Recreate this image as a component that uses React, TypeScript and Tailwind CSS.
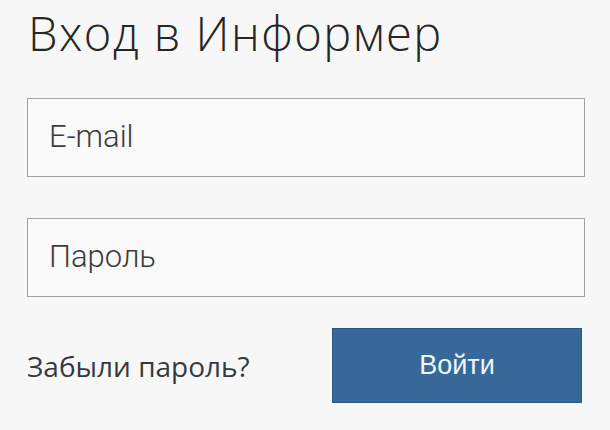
export default function App() {
  return (
    <div className="h-[430px] w-[610px] bg-[#f7f7f7] overflow-hidden">
      <form className="flex flex-col pl-[27px] pt-[10px] w-[585px]">
        {/* Title */}
        <h1 className="font-['Open_Sans',sans-serif] font-[350] text-[47px] leading-none tracking-[1.5px] text-[#262626] pl-[1px]">
          Вход в Информер
        </h1>

        {/* Fields */}
        <div className="mt-[41px] flex flex-col gap-[41px]">
          <div className="h-[79px] border-[1.5px] border-[#a2a2a2] bg-[#f9f9f9] flex items-center pl-[21px]">
            <span className="font-['Roboto',sans-serif] font-light text-[31px] text-[#3c3c3c]">E-mail</span>
          </div>
          <div className="h-[79px] border-[1.5px] border-[#a2a2a2] bg-[#f9f9f9] flex items-center pl-[21px]">
            <span className="font-['Roboto',sans-serif] font-light text-[31px] text-[#3c3c3c]">Пароль</span>
          </div>
        </div>

        {/* Actions */}
        <div className="mt-[31px] flex items-center justify-between pr-[3px]">
          <a className="font-['Open_Sans',sans-serif] text-[28px] leading-none text-[#353a40]">
            Забыли пароль?
          </a>
          <button
            type="button"
            className="h-[75px] w-[250px] bg-[#36689a] border border-[#2b5680] flex items-center justify-center font-['Liberation_Sans',Arial,sans-serif] text-[27px] text-[#eef7fc]"
          >
            Войти
          </button>
        </div>
      </form>
    </div>
  );
}
